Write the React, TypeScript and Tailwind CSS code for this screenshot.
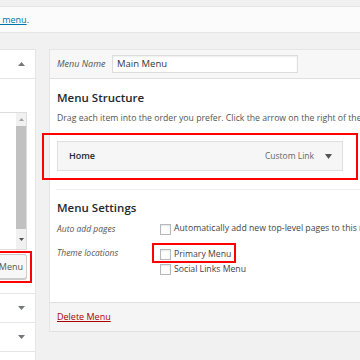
import React from "react";

const Tri = ({ up = false }: { up?: boolean }) => (
  <svg width="7" height="4" viewBox="0 0 7 4" className="block">
    <polygon points={up ? "0,4 7,4 3.5,0" : "0,0 7,0 3.5,4"} fill="#72777c" />
  </svg>
);

const Box = () => (
  <span className="block w-[11px] h-[11px] border border-[#b4b9be] bg-white shadow-[inset_0_1px_2px_rgba(0,0,0,0.1)] shrink-0" />
);

const App: React.FC = () => {
  return (
    <div className="relative w-[360px] h-[360px] overflow-hidden bg-[#f1f1f1] font-['Open_Sans',sans-serif] text-[9px] text-[#444]">
      {/* Intro strip */}
      <div className="mt-[6px] h-[27px] border-y border-[#e5e5e5] bg-[#fbfbfb] flex items-center">
        <div className="w-[29px] overflow-hidden flex justify-end whitespace-nowrap">
          <span>
            or <span className="text-[#0073aa] underline">create a new menu</span>.
          </span>
        </div>
      </div>

      <div className="mt-[16px] flex items-start">
        {/* Left column */}
        <div className="shrink-0 w-[36px] h-[320px] bg-white border-t border-r border-[#e5e5e5] flex flex-col">
          <div className="h-[29px] border-b border-[#e5e5e5] flex items-center justify-end pr-[10px]">
            <Tri up />
          </div>
          <div className="mt-[33px] w-[27px] h-[138px] border border-l-0 border-[#ddd] flex justify-end">
            <div className="w-[10px] bg-[#f1f1f1] flex flex-col">
              <div className="h-[13px] flex items-center justify-center">
                <svg width="5" height="3" viewBox="0 0 5 3"><polygon points="0,3 5,3 2.5,0" fill="#a3a3a3" /></svg>
              </div>
              <div className="h-[103px] bg-[#c1c1c1]" />
              <div className="flex-1 flex items-center justify-center">
                <svg width="5" height="3" viewBox="0 0 5 3"><polygon points="0,0 5,0 2.5,3" fill="#505050" /></svg>
              </div>
            </div>
          </div>
          <div className="relative mt-[4px] h-[25px] w-[27px] border border-l-0 border-[#ccc] bg-[#f7f7f7] rounded-r-[3px] flex items-center justify-end pr-[3px] text-[9px] text-[#555] shadow-[0_1px_0_#ccc]">
            Menu
            <div className="absolute left-[-4px] top-[-4px] w-[36px] h-[32px] border-2 border-[#ff0000]" />
          </div>
          <div className="mt-[14px] border-t border-[#e5e5e5]">
            <div className="h-[29px] border-b border-[#e5e5e5] flex items-center justify-end pr-[10px]">
              <Tri />
            </div>
            <div className="h-[29px] border-b border-[#e5e5e5] flex items-center justify-end pr-[10px]">
              <Tri />
            </div>
          </div>
        </div>

        {/* Menu edit panel */}
        <div className="ml-[13px] flex-1 min-w-0 bg-white border-t border-l border-[#e5e5e5] flex flex-col">
          <div className="h-[29px] bg-[#f7f7f7] border-b border-[#dfdfdf] flex items-center pl-[7px]">
            <span className="italic text-[9px] text-[#555] w-[55px] shrink-0">Menu Name</span>
            <div className="shrink-0 w-[186px] h-[18px] border border-[#ddd] bg-white shadow-[inset_0_1px_2px_rgba(0,0,0,0.07)] flex items-center pl-[4px] text-[9.5px] text-[#32373c]">
              Main Menu
            </div>
          </div>

          <div className="pl-[7px] pt-[10px]">
            <div className="text-[11.5px] font-semibold text-[#23282d] leading-[18px]">Menu Structure</div>
            <div className="mt-[5px] whitespace-nowrap text-[8.7px] text-[#555] leading-[12px]">
              Drag each item into the order you prefer. Click the arrow on the right of the item to reveal additional configuration options.
            </div>
            <div className="relative mt-[17px] w-[286px] h-[30px] border border-[#dfdfdf] bg-[#f6f6f6] flex items-center pl-[11px] pr-[10px]">
              <span className="font-semibold text-[9px] text-[#23282d]">Home</span>
              <span className="ml-auto text-[8.5px] text-[#666]">Custom Link</span>
              <span className="ml-[11px]">
                <svg width="7" height="5" viewBox="0 0 7 5"><polygon points="0,0 7,0 3.5,5" fill="#555" /></svg>
              </span>
              <div className="absolute left-[-16px] top-[-9px] w-[316px] h-[47px] border-2 border-[#ff0000]" />
            </div>
          </div>

          <div className="ml-[6px] mt-[18px] border-t border-[#eee] pl-[1px] pt-[9px]">
            <div className="text-[11.5px] font-semibold text-[#23282d] leading-[18px]">Menu Settings</div>
            <div className="mt-[5px] flex">
              <span className="italic text-[8.5px] text-[#555] w-[103px] shrink-0 leading-[14px]">Auto add pages</span>
              <div className="flex items-center gap-[3px] whitespace-nowrap text-[8.7px] text-[#444]">
                <Box />
                <span>Automatically add new top-level pages to this menu</span>
              </div>
            </div>
            <div className="mt-[10px] flex">
              <span className="italic text-[8.5px] text-[#555] w-[103px] shrink-0 leading-[14px]">Theme locations</span>
              <div className="flex flex-col gap-[3px] text-[8.7px] text-[#444] pt-[2px]">
                <div className="relative flex items-center gap-[3px]">
                  <Box />
                  <span className="leading-[12px]">Primary Menu</span>
                  <div className="absolute left-[-8px] top-[-5px] w-[84px] h-[20px] border-2 border-[#ff0000]" />
                </div>
                <div className="flex items-center gap-[3px]">
                  <Box />
                  <span className="leading-[12px]">Social Links Menu</span>
                </div>
              </div>
            </div>
          </div>

          <div className="mt-[27px] h-[30px] bg-[#f5f5f5] border-y border-[#dfdfdf] flex items-center pl-[7px]">
            <span className="text-[9px] text-[#a00] underline">Delete Menu</span>
          </div>
        </div>
      </div>
    </div>
  );
};

export default App;
